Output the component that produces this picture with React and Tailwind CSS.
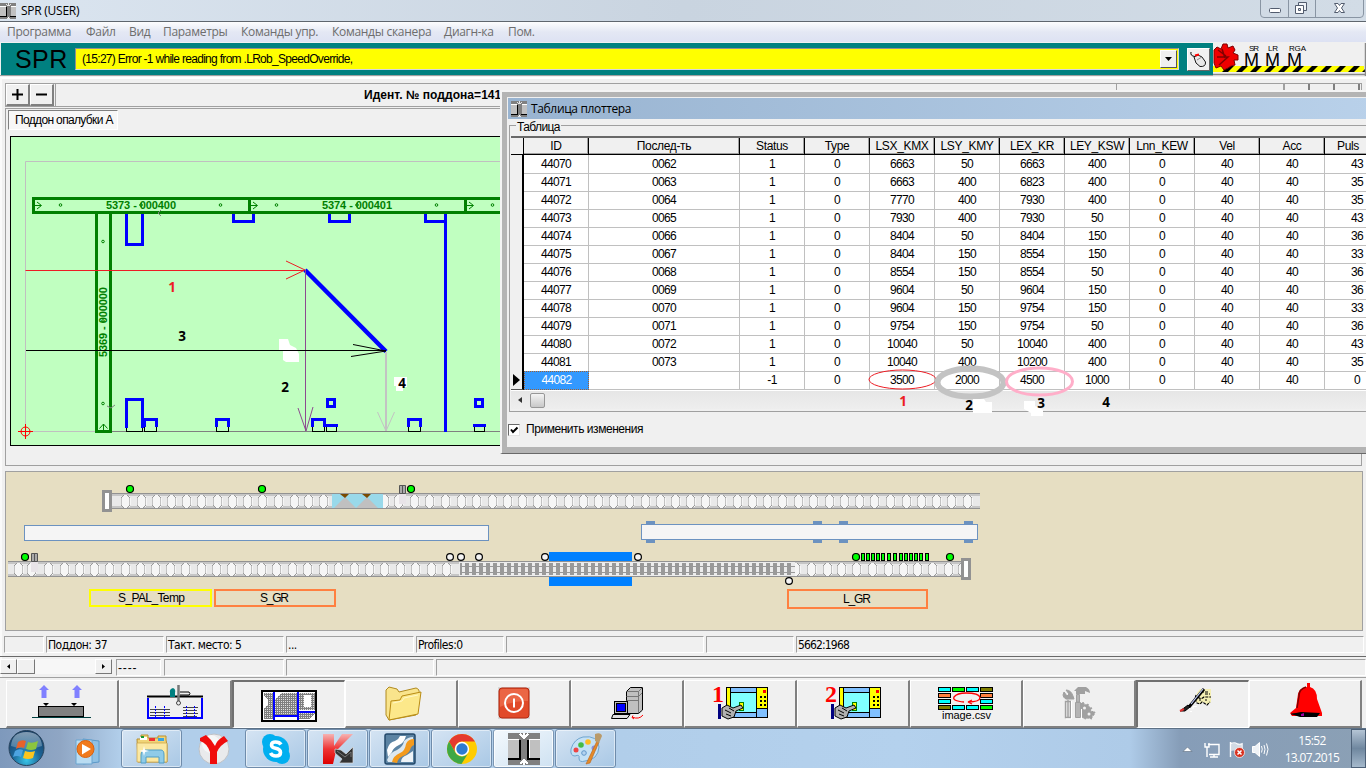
import React from "react";

const SANS = "font-['Liberation_Sans',sans-serif]";
const UI = "font-['Open_Sans','Noto_Sans',sans-serif]";

function PressIcon({ className }) {
  return (
    <svg className={className} viewBox="0 0 32 32" shapeRendering="crispEdges">
      <rect width="32" height="32" fill="#808080" />
      <path d="M0 7H11V26H0Z" fill="#c0c0c0" />
      <path d="M0 6H11V7H0ZM21 6H32V7H21Z" fill="#fff" />
      <path d="M11 7H13V27H0V25H11Z" fill="#000" />
      <path d="M21 7H32V25H21Z" fill="#c0c0c0" />
      <path d="M19 7H21V25H32V27H19Z" fill="#000" />
      <path d="M21 7V25" stroke="#fff" />
      <path d="M16 0V5M12 1L16 5L20 1M16 32V27M12 31L16 27L20 31" stroke="#fff" strokeWidth="1.6" fill="none" />
    </svg>
  );
}

function TitleBar() {
  return (
    <div className="relative flex h-[22px] shrink-0 items-start border-b border-[#5f666e] bg-linear-to-r from-[#dbe5f0] via-[#c9d4e0] to-[#d2dce6]">
      <PressIcon className="mt-[3px] h-4 w-4" />
      <span className={`ml-[5px] mt-[2px] text-[12px] leading-[17px] tracking-[-0.25px] text-black ${UI}`}>SPR (USER)</span>
      <svg className="ml-auto mr-[2px] h-[18px] w-[104px]" viewBox="1260 0 104 18">
        <path d="M1260.5 0V14Q1260.5 17.5 1264 17.5H1360Q1363.5 17.5 1363.5 14V0M1288.5 0V17M1315.5 0V17" fill="none" stroke="#8995a3" />
        <rect x="1269.5" y="8.5" width="11" height="4" rx="1" fill="#fff" stroke="#525c6e" />
        <path d="M1298.5 2.5H1306.5V10.5H1298.5Z" fill="#eef2f7" stroke="#525c6e" />
        <path d="M1295.5 5.5H1303.5V13.500H1295.500Z" fill="#fff" stroke="#525c6e" />
        <path d="M1298.500 8.500H1300.500V10.500H1298.500Z" fill="#dce4ed" stroke="#525c6e" />
        <path d="M1334.500 3.500H1338L1339.500 5.500L1341 3.500H1344.500L1341.500 8L1344.500 12.500H1341L1339.500 10.500L1338 12.500H1334.500L1337.500 8Z" fill="#fff" stroke="#525c6e" />
      </svg>
    </div>
  );
}

const MENU = [
  ["Программа", "w-[65px]"],
  ["Файл", "w-[29px]"],
  ["Вид", "w-[20px]"],
  ["Параметры", "w-[64px]"],
  ["Команды упр.", "w-[77px]"],
  ["Команды сканера", "w-[98px]"],
  ["Диагн-ка", "w-[50px]"],
  ["Пом.", "w-[28px]"],
];

function MenuBar() {
  return (
    <div className={`flex h-[20px] shrink-0 items-center gap-[14px] bg-linear-to-b from-[#fdfdfe] via-[#e4e8f4] to-[#dde2f3] pl-[7px] text-[12px] leading-[18px] tracking-[-0.3px] text-[#6d6d6d] ${UI}`}>
      {MENU.map(([t, w]) => (
        <span key={t} className={`${w} whitespace-nowrap`}>{t}</span>
      ))}
    </div>
  );
}

function RobotStatus() {
  const stripes = Array.from({ length: 11 }, (_, i) => 1222 + i * 14);
  return (
    <svg className="h-[33px] w-[153px] bg-[#f0f0f0]" viewBox="1213 43 153 33">
      <rect x="1213" y="66" width="151" height="6" fill="#ff0" />
      {stripes.map((x) => (
        <path key={x} d={`M${x} 72L${x + 6} 66H${x + 12}L${x + 6} 72Z`} fill="#000" />
      ))}
      <path d="M1223 44L1227 44L1228 48L1233 46L1235 50L1233 53L1238 55V60L1234 60L1235 65L1231 66L1228 68L1224 70L1221 66L1216 68L1214 63V50L1217 47L1221 49Z" fill="#f00000" stroke="#800000" />
      <path d="M1218 50L1226 56M1217 57H1228L1219 65M1222 49L1225 58" stroke="#800000" strokeWidth="1.500" fill="none" />
      <g fontFamily="Liberation Sans, sans-serif" fontSize="8" fill="#000">
        <text x="1249" y="51" textLength="10">SR</text>
        <text x="1268" y="51" textLength="10">LR</text>
        <text x="1289" y="51" textLength="17">RGA</text>
        <g fontSize="18">
          <text x="1244" y="66">M</text>
          <text x="1265" y="66">M</text>
          <text x="1287" y="66">M</text>
        </g>
      </g>
      <path d="M1213 74.500H1365M1365.500 43V76" stroke="#8a8a8a" strokeWidth="1.500" />
    </svg>
  );
}

function Header() {
  return (
    <div className="mt-px flex h-[33px] shrink-0 border-b border-[#a0a0a0] pl-px">
      <div className="flex h-[32px] w-[1212px] items-start bg-[#008080]">
        <span className={`ml-[14px] mt-[4px] w-[60px] text-[25px] leading-[25px] tracking-[0.4px] text-black ${SANS}`}>SPR</span>
        <div className="mt-[5px] flex h-[22px] w-[1104px] border border-[#d8d8d8] border-t-[#909090] border-l-[#909090] bg-[#ff0] p-px">
          <span className={`grow pl-[5px] pt-px text-[12px] leading-[17px] tracking-[-0.7px] whitespace-nowrap text-black ${SANS}`}>
            (15:27) Error -1 while reading from .LRob_SpeedOverride,
          </span>
          <div className="flex h-[18px] w-[17px] items-center justify-center border border-white border-r-[#555] border-b-[#555] bg-[#f0f0f0]">
            <svg className="h-1 w-[7px]" viewBox="0 0 7 4"><path d="M0 0H7L3.500 4Z" /></svg>
          </div>
        </div>
        <div className="mt-[5px] ml-[8px] flex h-[23px] w-[23px] items-center justify-center border border-white border-r-[#666] border-b-[#666] bg-[#f0f0f0]">
          <svg className="h-[17px] w-[17px]" viewBox="0 0 17 17">
            <path d="M1 1Q0 5 5 5.500" fill="none" stroke="#000" />
            <path d="M4 6L8 4L12 6L15.500 11Q16 16 10 15.500L6 12Z" fill="#e8e8e8" stroke="#000" strokeWidth=".9" />
            <path d="M5 4.500L9 3.500" stroke="#f00" strokeWidth="2" fill="none" />
            <path d="M7 9L11 6.500" stroke="#777" strokeWidth=".8" fill="none" />
          </svg>
        </div>
      </div>
      <RobotStatus />
    </div>
  );
}

function PlanText({ x, y, w, children, ...rest }) {
  return (
    <text x={x} y={y} textLength={w} fontFamily="Liberation Sans, sans-serif" fontSize="11" fontWeight="bold" fill="#008000" {...rest}>
      {children}
    </text>
  );
}

function PalletDrawing() {
  return (
    <svg className="h-[310px] w-[1345px]" viewBox="10 136 1345 310">
      <rect x="10.500" y="136.500" width="1344" height="309" fill="#c0ffc0" stroke="#000" />
      <path d="M1300 161.500H25.500V431.500H100" fill="none" stroke="#c0c0c0" />
      <path d="M100 431.500H1300" stroke="#808080" />
      <g fill="none" stroke="#008000" strokeWidth="3" shapeRendering="crispEdges">
        <path d="M600 198.500H33.500V212.500H600M249.500 199V212M465.500 199V212M96.500 213V431.500H110.500V213" />
      </g>
      <g fill="none" stroke="#008000" strokeWidth="1">
        <path d="M35 205.500H41M37 202L41.500 205.500L37 209M251 205.500H257M253 202L257.500 205.500L253 209M467 205.500H473M469 202L473.500 205.500L469 209M103.500 430V424M99.500 428.500L103.500 424L107.500 428.500" />
        {[60.500, 141, 220.500, 276.500, 357, 436.500, 492.500].map((x) => <circle key={x} cx={x} cy="205" r="1.300" />)}
        {[241.500, 321, 403.500].map((y) => <circle key={y} cx="103" cy={y} r="1.300" />)}
      </g>
      <PlanText x="106" y="209" w="70">5373 - 000400</PlanText>
      <PlanText x="322" y="209" w="70">5374 - 000401</PlanText>
      <PlanText x="0" y="0" w="70" transform="translate(107 357) rotate(-90)">5369 - 000000</PlanText>
      <path d="M161 210L158 213L161 216M107 406L111 408L115 405" fill="none" stroke="#808080" />
      <g fill="none" stroke="#000" shapeRendering="crispEdges">
        <path d="M126.500 426V431.500H142.500V426M144.500 426V431.500H156.500V426M216.500 426V431.500H228.500V426M312.500 426V431.500H324.500V426M326.500 426V431.500H336.500V426M408.500 426V431.500H420.500V426M474.500 426V431.500H484.500V426" />
      </g>
      <g fill="none" stroke="#00f" strokeWidth="3" shapeRendering="crispEdges">
        <path d="M126.500 214V244.500H142.500V214M233.500 214V221.500H253.500V214M329.500 214V221.500H349.500V214M425.500 214V221.500H445.500M445.500 214V432" />
        <path d="M126.500 428V399.500H142.500V428M144.500 427V419.500H156.500V427M216.500 427V419.500H228.500V427M312.500 427V419.500H324.500V427M326.500 427V425.500H336.500V427M408.500 427V419.500H420.500V427M474.500 427V425.500H484.500V427" />
        <path d="M327.500 399.500H334.500V406.500H327.500ZM475.500 399.500H482.500V406.500H475.500Z" />
      </g>
      <path d="M25.500 270.500H305M286 261L305 270L286 279" fill="none" stroke="#ed1c24" />
      <path d="M279 339H288L290 345L296 348L299 354V362H286L283 360V351L279 350Z" fill="#fff" />
      <path d="M305 270L386 351.500" stroke="#00f" strokeWidth="4.500" />
      <path d="M305.500 270V431M298 408L306 431L313 407" fill="none" stroke="#8d4a90" />
      <path d="M26 350.500H386M353 344.500L386 351L351 356.500" fill="none" stroke="#000" />
      <path d="M386 352V431" stroke="#c3c3c3" strokeWidth="2" />
      <path d="M377.500 412L386 431L394.500 412" fill="none" stroke="#c3c3c3" />
      <path d="M394 377H407V387H403V391H396V386H394Z" fill="#fff" />
      <g stroke="#f00" fill="none">
        <circle cx="25.500" cy="431.500" r="4.500" />
        <path d="M18 431.500H33M25.500 424V439" />
      </g>
      <g fontFamily="Open Sans, sans-serif" fontWeight="bold" fontSize="13.500" textAnchor="middle">
        <text x="172" y="292" fill="#ed1c24">1</text>
        <text x="182" y="341">3</text>
        <text x="285" y="392">2</text>
        <text x="402" y="388">4</text>
      </g>
    </svg>
  );
}

function ZoomButton({ children }) {
  return (
    <div className="flex h-[22px] w-[24px] items-center justify-center border border-white border-r-2 border-b-2 border-r-[#808080] border-b-[#808080] bg-[#f0f0f0]">
      {children}
    </div>
  );
}

function Workspace() {
  return (
    <div className="mt-[4px] flex h-[383px] shrink-0 flex-col gap-px pl-[5px] pr-[4px]">
      <div className="flex h-[24px] border border-[#a0a0a0] border-b-[#a0a0a0]">
        <ZoomButton><svg className="h-[11px] w-[11px]" viewBox="0 0 11 11"><path d="M5.500 0V11M0 5.500H11" stroke="#000" strokeWidth="2" /></svg></ZoomButton>
        <ZoomButton><svg className="h-[11px] w-[11px]" viewBox="0 0 11 11"><path d="M0 5.500H11" stroke="#000" strokeWidth="2" /></svg></ZoomButton>
        <div className="ml-px flex grow border-l border-[#a0a0a0]">
          <div className={`w-[1060px] pl-[308px] text-[12px] leading-[22px] font-bold tracking-[0.05px] whitespace-nowrap ${SANS}`}>Идент. № поддона=141</div>
          <div className="w-[169px] border-l border-r-2 border-[#a0a0a0]" />
          <div className="w-[25px] border-r-2 border-[#808080]" />
          <div className="w-[25px] border-r-2 border-[#808080]" />
          <div className="w-[25px] border-r-2 border-[#808080]" />
        </div>
      </div>
      <div className="h-[358px] border border-[#a0a0a0] pl-[2px] pt-px">
        <div className={`h-[20px] w-[110px] border border-[#808080] border-r-white border-b-white bg-[#f7f7f7] pl-[6px] text-[12px] leading-[18px] tracking-[-0.65px] whitespace-nowrap ${SANS}`}>Поддон опалубки A</div>
        <div className="mt-[6px] ml-[2px]"><PalletDrawing /></div>
      </div>
    </div>
  );
}

function Roller({ x, y }) {
  const l = Math.round(x) - 4;
  return (
    <g shapeRendering="crispEdges">
      <path d={`M${l} ${y + 3}h1v-2h2v-1h4v1h2v2h1v7h-1v2h-2v1h-4v-1h-2v-2h-1z`} fill="#f6f6f6" />
      <path d={`M${l} ${y + 3}h1v7h-1zM${l + 8} ${y + 3}h1v7h-1z`} fill="#c2c2c2" />
      <path d={`M${l} ${y + 2}h1v1h-1zM${l + 1} ${y + 1}h1v1h-1zM${l + 8} ${y + 2}h1v1h-1zM${l + 7} ${y + 1}h1v1h-1zM${l} ${y + 10}h1v1h-1zM${l + 1} ${y + 11}h1v1h-1zM${l + 8} ${y + 10}h1v1h-1zM${l + 7} ${y + 11}h1v1h-1zM${l + 2} ${y}h1v1h-1zM${l + 6} ${y}h1v1h-1zM${l + 2} ${y + 12}h1v1h-1zM${l + 6} ${y + 12}h1v1h-1z`} fill="#999" />
    </g>
  );
}

function Track({ x, y, w }) {
  return (
    <g shapeRendering="crispEdges">
      <rect x={x} y={y} width={w} height="16" fill="#c6c6c6" />
      <rect x={x} y={y + 3} width={w} height="10" fill="#e9e9e9" />
      <rect x={x} y={y} width={w} height="1" fill="#929292" />
      <rect x={x} y={y + 15} width={w} height="1" fill="#929292" />
    </g>
  );
}

function Buffer({ x, y }) {
  return (
    <g shapeRendering="crispEdges">
      <rect x={x} y={y} width="10" height="22" fill="#929292" />
      <rect x={x + 3} y={y + 3} width="4" height="16" fill="#fff" />
    </g>
  );
}

const UPPER = [125, 141, 156, 171, 185.500, 201, 217, 232, 246.500, 262, 278, 293.500, 308, 322.500, 384, 398, 414, 429, 445, 460.500, 476, 492, 507, 522, 537, 552, 568, 583, 598, 613, 629, 645, 660, 675, 690, 705, 721, 737, 752, 767, 782, 798, 813, 829, 844, 859, 874, 890, 906, 921, 936, 951, 967];
const LOWER = [18, 31, 48, 64, 79, 94, 109, 125, 140, 154.500, 169.500, 185, 200.500, 215.500, 231, 246.500, 261, 276, 292, 307, 322.500, 338, 353.500, 368.500, 384, 400, 415, 430.500, 446];
const LOWER_RIGHT = [795, 811, 826.500, 841, 856, 872, 887.500, 902.500, 917, 932, 948, 962];
const RACK = Array.from({ length: 47 }, (_, i) => 465 + i * 7);
const GREEN = [[130, 489], [262, 489], [411, 489], [25, 557], [856, 557], [950, 557]];
const WHITE = [[450, 557], [461, 557], [479, 557], [545, 557], [638, 557], [789, 581]];
const LEDS = [861, 866, 871, 876, 881, 887, 893, 899, 904, 909, 914, 919, 925];

function LineDiagram() {
  return (
    <div className="mt-[5px] ml-[5px] h-[160px] w-[1358px] shrink-0 border border-[#a0a0a0] bg-[#e6dec2]">
      <svg className="h-[158px] w-[1356px]" viewBox="6 472 1356 158">
        <Track x={110} y={493} w={870} />
        {UPPER.map((x) => <Roller key={x} x={x} y={495} />)}
        <Buffer x={102} y={490} />
        <rect x="332" y="494" width="51" height="14" fill="#99d9ea" />
        <path d="M334 508L345 497L356 508ZM356 508L367 497L378 508Z" fill="#c0c0c0" />
        <path d="M340 494H349L345 498ZM362 494H371L367 498Z" fill="#7a4a00" />
        <rect x="399" y="494" width="7" height="10" fill="#e8e4e8" />
        <path d="M399.500 485.500H405.500V493.500H399.500ZM402.500 486V493" fill="#aaa" stroke="#555" />

        <g shapeRendering="crispEdges">
          <path d="M24.500 525.500H488.500V540.500H24.500ZM641.500 524.500H977.500V539.500H641.500Z" fill="#f5f5f5" stroke="#6c92c0" />
          {[646, 813, 839, 964].map((x) => (
            <path key={x} d={`M${x} 521h9v3h-9zM${x} 540h9v3h-9z`} fill="#6c92c0" />
          ))}
          <path d="M549 552H632V561H549ZM549 577H632V586H549Z" fill="#0080ff" />
        </g>

        <Track x={8} y={561} w={955} />
        {LOWER.map((x) => <Roller key={x} x={x} y={563} />)}
        {LOWER_RIGHT.map((x) => <Roller key={x} x={x} y={563} />)}
        <g shapeRendering="crispEdges">
          <rect x="459" y="562" width="336" height="14" fill="#ececec" />
          <path d="M460 566.500H795M460 572.500H795" stroke="#999" />
          <rect x="460" y="563" width="2" height="12" fill="#999" />
          {RACK.map((x) => <rect key={x} x={x} y="563" width="4" height="12" fill="#999" />)}
        </g>
        <Buffer x={961} y={558} />
        <rect x="31" y="562" width="7" height="10" fill="#e8e4e8" />
        <path d="M31.500 553.500H37.500V561.500H31.500ZM34.500 554V561" fill="#aaa" stroke="#555" />

        {GREEN.map(([x, y]) => <circle key={x} cx={x} cy={y} r="3.500" fill="#0f0" stroke="#000" strokeWidth="1.200" />)}
        {WHITE.map(([x, y]) => <circle key={x} cx={x} cy={y} r="3.400" fill="#f5f5f5" stroke="#000" strokeWidth="1.200" />)}
        {LEDS.map((x) => <rect key={x} x={x + 0.500} y="553.500" width="3" height="7" fill="#0f0" stroke="#000" shapeRendering="crispEdges" />)}

        <g fill="none" strokeWidth="2" shapeRendering="crispEdges">
          <rect x="90" y="590" width="121" height="16" stroke="#ff0" />
          <rect x="215" y="590" width="120" height="16" stroke="#ff8040" />
          <rect x="788" y="590" width="139" height="18" stroke="#ff8040" />
        </g>
        <g fontFamily="Liberation Sans, sans-serif" fontSize="12" fill="#000">
          <text x="118" y="602" textLength="67">S_PAL_Temp</text>
          <text x="260" y="602" textLength="29">S_GR</text>
          <text x="843" y="603" textLength="28">L_GR</text>
        </g>
      </svg>
    </div>
  );
}

const CELL = "h-[17px] border border-[#a0a0a0] border-r-white border-b-white pl-px text-[12px] leading-[16px] whitespace-nowrap";

function StatusBars() {
  return (
    <>
      <div className="flex h-[26px] shrink-0 items-start gap-[2px] border-b border-[#696969] pt-[5px] pl-[4px] font-['DejaVu_Sans_Condensed','DejaVu_Sans',sans-serif] text-black tracking-[-0.5px]">
        <div className={`${CELL} w-[40px]`} />
        <div className={`${CELL} w-[118px]`}>Поддон: 37</div>
        <div className={`${CELL} w-[118px]`}>Такт. место: 5</div>
        <div className={`${CELL} w-[128px]`}>...</div>
        <div className={`${CELL} w-[88px]`}>Profiles:0</div>
        <div className={`${CELL} w-[198px]`} />
        <div className={`${CELL} w-[88px]`} />
        <div className={`${CELL} w-[568px] tracking-[-0.85px]`}>5662:1968</div>
      </div>
      <div className="flex h-[21px] shrink-0 items-start border-b border-[#a0a0a0] pt-[2px]">
        <div className="flex h-[15px] w-[112px] bg-[#f7f7f7]">
          <div className="flex w-[17px] items-center justify-center border border-white border-r-[#777] border-b-[#777] bg-[#f0f0f0]"><svg className="h-[5px] w-[3px]" viewBox="0 0 3 5"><path d="M3 0V5L0 2.500Z" /></svg></div>
          <div className="w-[18px] border border-white border-r-[#777] border-b-[#777] bg-[#f0f0f0]" />
          <div className="ml-auto flex w-[17px] items-center justify-center border border-white border-r-[#777] border-b-[#777] bg-[#f0f0f0]"><svg className="h-[5px] w-[3px]" viewBox="0 0 3 5"><path d="M0 0V5L3 2.500Z" /></svg></div>
        </div>
        <div className={`${CELL} ml-[4px] w-[45px] tracking-[0.900px] ${SANS}`}>----</div>
        <div className={`${CELL} ml-[3px] w-[120px]`} />
        <div className={`${CELL} ml-[2px] w-[148px]`} />
        <div className={`${CELL} ml-[2px] w-[931px]`} />
      </div>
    </>
  );
}

function PanelIcon({ n }) {
  return (
    <svg className="h-[46px] w-[110px]" viewBox="0 0 110 46">
      <text x="27" y="21" fontFamily="Liberation Serif, serif" fontWeight="bold" fontSize="24" fill="#f00">{n}</text>
      <g shapeRendering="crispEdges" stroke="#000">
        <path d="M41.500 6.500H71.500V36.500H41.500Z" fill="#80c0ff" />
        <path d="M41.500 6.500H45.500V30H41.500Z" fill="#ff0" />
        <path d="M45.500 11.500H71.500V31.500H45.500Z" fill="#80ffff" />
        <path d="M71.500 6.500H82.500V27.500H71.500Z" fill="#ff0" />
        <path d="M71.500 27.500H82.500V36.500H71.500Z" fill="#80c0ff" />
        <rect x="54.500" y="21.500" width="4" height="8" fill="#ff0" stroke="#008000" />
      </g>
      <path d="M75 15h2v2h-2zM79 15h2v2h-2zM75 19h2v2h-2zM79 19h2v2h-2zM75 23h2v2h-2zM79 23h2v2h-2z" />
      <rect x="78" y="9" width="3" height="3" fill="#f00" />
      <rect x="33" y="23" width="3" height="15" fill="#000080" />
      <path d="M37 27L42 24L48 27L56 24L58 27L51 30L49 36L43 38L37 35Z" fill="#b0b0b0" stroke="#000" />
      <path d="M40 29L46 32M41 33L46 35M44 27L49 30" stroke="#000" />
    </svg>
  );
}

function ToolIcon({ kind }) {
  if (kind === "press1") return <PanelIcon n="1" />;
  if (kind === "press2") return <PanelIcon n="2" />;
  return (
    <svg className="h-[46px] w-[110px]" viewBox="0 0 110 46">
      {kind === "lift" && (
        <g>
          <path d="M37 4L42 9H39.500V17H34.500V9H32ZM70 4L75 9H72.500V17H67.500V9H65Z" fill="#8080ff" />
          <path d="M36 22H42L39 25ZM64 22H70L67 25Z" />
          <rect x="31.500" y="25.500" width="45" height="10" fill="#808080" stroke="#000" />
          <path d="M25 36.500H84" stroke="#004040" />
        </g>
      )}
      {kind === "robot" && (
        <g fill="none">
          <path d="M28 17V37H82V17" stroke="#00f" strokeWidth="2" />
          <path d="M27 15.500H83" stroke="#000" strokeWidth="2" />
          <path d="M50 16V12Q49 8 53 7Q56 8 55 12V16Z" fill="#008080" />
          <path d="M58.500 4V20" stroke="#777" strokeWidth="2.500" />
          <circle cx="58.500" cy="22" r="2" stroke="#444" />
          <path d="M60 11H69Q71 13 69 14H60" stroke="#000" />
          <path d="M30 28.500H50M30 31.500H50M30 34.500H50M63 26.500H78M63 29.500H77M63 32.500H78M63 35.500H77" stroke="#444" />
          <path d="M35.500 25V37M44.500 25V37M66.500 25V37M74.500 25V37" stroke="#00f" strokeDasharray="2 1" />
        </g>
      )}
      {kind === "layout" && (
        <g shapeRendering="crispEdges">
          <defs>
            <pattern id="mesh" width="2" height="2" patternUnits="userSpaceOnUse"><rect width="2" height="2" fill="#e0e0e0" /><rect width="1" height="2" fill="#808080" /><rect width="2" height="1" fill="#808080" /></pattern>
          </defs>
          <rect x="28" y="9" width="54" height="30" fill="#fff" stroke="#000" strokeWidth="2" />
          <path d="M30 11H39V37H30V26L34 22V18L30 14ZM41 17L47 11H63V33H41ZM65 11H81V28H65ZM65 31H81L76 37H65Z" fill="url(#mesh)" />
          <rect x="70" y="13" width="7" height="12" fill="#fff" />
          <path d="M40 10V38M64 10V38M40 34H64M64 30H81" stroke="#00f" strokeWidth="2" />
        </g>
      )}
      {kind === "folder" && (
        <g transform="translate(39 5)">
          <path d="M1 4L4 1L12 3L14 6L31 2Q35 3 34 8L31 29L4 34L1 29Z" fill="#f9e48c" stroke="#b08a20" />
          <path d="M4 34L6 15L15 14L17 10L36 6L33 28Z" fill="#fce88a" stroke="#b98c14" />
          <path d="M8 17L17 15L19 12L33 9" stroke="#fff8c8" fill="none" />
        </g>
      )}
      {kind === "power" && (
        <g>
          <rect x="39" y="6" width="32" height="32" fill="#d8d8d8" />
          <rect x="40" y="7" width="30" height="30" rx="3" fill="#e14a29" stroke="#b32a12" />
          <path d="M41 10Q41 8 44 8H67Q69 8 69 10V20Q55 19 41 26Z" fill="#f07454" opacity=".65" />
          <circle cx="55" cy="22" r="9" fill="none" stroke="#fff" strokeWidth="2" />
          <path d="M55 17.500V26.500" stroke="#fff" strokeWidth="2" />
        </g>
      )}
      {kind === "server" && (
        <g stroke="#000">
          <path d="M54.500 10.500L58.500 6.500H70.500V29L66.500 32.500H54.500Z" fill="#c0c0c0" />
          <path d="M54.500 10.500H66.500L70.500 6.500M66.500 10.500V32M54.500 15.500H66.500L70 12M54.500 19.500H66.500" fill="none" stroke="#777" />
          <rect x="42.500" y="20.500" width="13" height="12" fill="#c0c0c0" />
          <rect x="44.500" y="22.500" width="9" height="8" fill="#00f" />
          <path d="M41 33.500H58L55 37.500H39.500Z" fill="#e0e0e0" />
          <path d="M60 36Q67 39 71 34M61 34.500L60 36.500L62 38" fill="none" stroke="#f00" />
        </g>
      )}
      {kind === "csv" && (
        <g>
          {[["#0ff", 28, 6], ["#0f0", 42, 6], ["#0ff", 56, 6], ["#808000", 70, 6], ["#ff8040", 28, 12], ["#ff8040", 70, 12], ["#0ff", 28, 18], ["#0ff", 70, 18], ["#808000", 28, 24], ["#0ff", 42, 24], ["#0ff", 56, 24], ["#0f0", 70, 24]].map(([c, x, y]) => (
            <rect key={`${x}-${y}`} x={x - 0.500} y={y + 0.500} width="12" height="4" fill={c} stroke="#000" shapeRendering="crispEdges" />
          ))}
          <path d="M53 21Q41 20 43 16Q46 12 55 12Q68 12 69 16.500Q69 21 57 21L61 19M57 21L61 23" fill="none" stroke="#f00" strokeWidth="1.300" />
          <text x="31" y="38" fontFamily="Liberation Sans, sans-serif" fontSize="11" textLength="49">image.csv</text>
        </g>
      )}
      {kind === "tools" && (
        <g fill="#a0a0a0">
          <path d="M42 9Q47 9 49 15L50 18H45Q40 19 39 14L40 11L43 15L45 13Z" stroke="#a0a0a0" />
          <path d="M41.500 20.500H46.500V36.500H41.500ZM44 19V36" fill="#e8e8e8" stroke="#a0a0a0" strokeWidth="1.400" />
          <path d="M50 10L54 6H62Q66 8 66 12L61 10V13H52V10Z" />
          <path d="M52.500 13.500H55.500V21H52.500ZM51.500 21.500H56.500V36.500H51.500Z" fill="#b4b4b4" stroke="#a0a0a0" />
          <path d="M57 23L59 21L61 24L64 23L65 26L68 27L66 30L71 31L70 34L68 35V38L64 37L61 38L58 36L57 31Z" strokeDasharray="2 1" stroke="#a0a0a0" />
          <circle cx="60.500" cy="27" r="1.500" fill="#f0f0f0" /><circle cx="65" cy="33" r="1.500" fill="#f0f0f0" />
          <path d="M47.500 20V38M57.500 28V38M42 38H47" stroke="#fff" fill="none" />
        </g>
      )}
      {kind === "paint" && (
        <g>
          <path d="M59 11L62 7H73V20L71 22L68 22L66 20L62 22L58 20L57 16Z" fill="#f4efb4" />
          <path d="M58 13L57 17L59 21L62 22L64 20L66 21L69 23L72 20M60 15Q63 18 66 15H73M63 10H70M67 12H72M61 18H63M67 18H69" stroke="#000" fill="none" strokeWidth="1.100" strokeDasharray="3 1" />
          <path d="M66 7L51 25" stroke="#000" strokeWidth="3" />
          <path d="M65 7L53 22" stroke="#c8d4ff" strokeWidth="1.200" />
          <path d="M42 29L50 23L52 25L47 29Z" stroke="#000" fill="#222" />
          <path d="M42 29L46 27" stroke="#d33" strokeWidth="2" />
          <path d="M52 29.500H54M55 27V24.500H59" stroke="#fff" fill="none" />
        </g>
      )}
      {kind === "bell" && (
        <g>
          <path d="M57 2H60V6Q67 8 67 18L72 32V35H42L40 32L46 27L48 13Q49 7 57 6Z" fill="#f00" />
          <path d="M56 6Q49 8 49 15L47 27M41 33H47" fill="none" stroke="#800000" strokeWidth="1.500" />
          <path d="M41 33L51 31L70 32L67 36H50Z" fill="#000" />
          <path d="M51 33L54 32V35H51Z" fill="#a000a0" />
        </g>
      )}
    </svg>
  );
}

const TOOLS = ["lift", "robot", "layout", "folder", "power", "server", "press1", "press2", "csv", "tools", "paint", "bell"];

function ToolBar() {
  return (
    <div className="flex h-[50px] shrink-0 pt-[2px] pl-[6px]">
      {TOOLS.map((k) => {
        const down = k === "layout" || k === "paint";
        return (
          <div
            key={k}
            className={
              down
                ? "h-[48px] w-[113px] border border-t-2 border-l-2 border-[#707070] border-r-white border-b-white bg-[#f0f0f0]"
                : "h-[48px] w-[113px] border border-r-2 border-b-2 border-white border-r-[#808080] border-b-[#808080]"
            }
          >
            <ToolIcon kind={k} />
          </div>
        );
      })}
    </div>
  );
}

function TaskIcon({ kind }) {
  if (kind === "spr") return <PressIcon className="h-8 w-8" />;
  return (
    <svg className="h-8 w-8" viewBox="0 0 32 32">
      {kind === "explorer" && (
        <g>
          <path d="M1 6H5V2H12V5H22V3H30V7L31 12V29H2Z" fill="#f0d477" stroke="#b99132" />
          <path d="M4 4H11V7H4Z" fill="#fff" /><path d="M5 3H8V5H5Z" fill="#1c9b30" /><path d="M13 5H19V8H13Z" fill="#e33" /><path d="M22 5H28V8H22Z" fill="#3ba4e0" />
          <path d="M1 10H31V29H1Z" fill="#fbe8a2" stroke="#c9a048" strokeWidth=".7" />
          <path d="M5 30V22Q5 17 10 17H25Q28 17 28 22V30H23V24H10V30Z" fill="#8fcbe8" stroke="#4f9dc6" />
          <path d="M8 13L9 17L13 18L9 19L8 23L7 19L3 18L7 17Z" fill="#fff" />
        </g>
      )}
      {kind === "yandex" && (
        <g>
          <circle cx="16" cy="16" r="15" fill="#e9eaec" stroke="#bfc2c6" />
          <circle cx="13" cy="11" r="9" fill="#fff" opacity=".6" />
          <path d="M2 5L8 2Q14 7 17 13Q19 7 26 3L30 8Q22 12 19 19V31H12V19Q9 10 2 8Z" fill="#f00c0c" />
        </g>
      )}
      {kind === "skype" && (
        <g>
          <circle cx="10" cy="9" r="8" fill="#00aff0" /><circle cx="22" cy="23" r="8" fill="#00aff0" /><circle cx="16" cy="16" r="13" fill="#00aff0" />
          <path d="M21 11.500Q19.500 9 15.500 9Q11.500 9 11.500 12Q11.500 14.500 15.500 15.300Q20.500 16.300 20.500 19.500Q20.500 23 16 23Q12 23 10.500 20" stroke="#fff" strokeWidth="3.600" fill="none" />
        </g>
      )}
      {kind === "kaspersky" && (
        <g>
          <defs><linearGradient id="kr" x1="0" y1="0" x2="0" y2="1"><stop offset="0" stopColor="#f6b3b3" /><stop offset=".5" stopColor="#e33" /><stop offset="1" stopColor="#d00" /></linearGradient></defs>
          <path d="M1 1H12V13L20 1H31L14 18L11 31H1Z" fill="url(#kr)" />
          <path d="M13 16L19 17L24 21L31 14V30H17L20 26L13 20Z" fill="#333" stroke="#ddd" strokeWidth=".7" />
          <path d="M15 18L23 24L29 19V24" fill="none" stroke="#777" />
        </g>
      )}
      {kind === "foxit" && (
        <g>
          <rect x="1" y="1" width="30" height="30" rx="2" fill="#5b83a3" stroke="#24496b" strokeWidth="1.500" />
          <path d="M3 17Q5 9 11 8Q15 6 16 3H22Q20 10 15 12Q9 15 8 19L4 24Z" fill="#fff" />
          <path d="M3 27Q6 19 13 17Q19 14 20 8Q24 4 29 4V9Q25 10 24 14Q23 20 16 22Q10 24 9 29H4Z" fill="#dce8f1" />
          <path d="M8 29Q9 23 16 20Q21 18 22 11Q24 6 30 6V12Q27 13 26 17Q24 21 19 23Q14 25 13 30Z" fill="#f39a1c" />
          <path d="M17 29Q17 24 23 22L29 18V29Z" fill="#eef3f7" />
        </g>
      )}
      {kind === "chrome" && (
        <g>
          <circle cx="16" cy="16" r="15" fill="#fc0" />
          <path d="M3 8.500A15 15 0 0 1 29 8.500H16A7.500 7.500 0 0 0 9.500 19.500Z" fill="#e53a2e" />
          <path d="M3 8.500A15 15 0 0 0 15.500 31L22.500 19.700A7.500 7.500 0 0 1 9.500 19.700Z" fill="#3fa845" />
          <circle cx="16" cy="16" r="7.200" fill="#fff" />
          <circle cx="16" cy="16" r="5.700" fill="#2d7bd1" />
        </g>
      )}
      {kind === "paint" && (
        <g>
          <path d="M13 4Q28 2 29 14Q28 27 15 28Q9 30 9 25Q10 21 5 23Q0 23 1 16Q4 6 13 4Z" fill="#c4e1f5" stroke="#6fa5cf" />
          <circle cx="14" cy="20" r="2.300" fill="#b4d4ef" stroke="#6298cb" />
          <circle cx="6" cy="17" r="2.500" fill="#e44" /><circle cx="11" cy="12" r="2.800" fill="#4b4" /><circle cx="18" cy="9" r="2.800" fill="#fb2" /><circle cx="24" cy="15" r="2.500" fill="#8a8fd8" />
          <path d="M27 8L29 9L20 30L16 31Z" fill="#e48a29" stroke="#b9631a" strokeWidth=".6" />
          <path d="M25 1Q31 -1 32 3L29 10L25 8Z" fill="#b99a6a" />
        </g>
      )}
    </svg>
  );
}

const TASKS = ["explorer", "yandex", "skype", "kaspersky", "foxit", "chrome", "spr", "paint"];

function TaskBar() {
  return (
    <div className="flex h-[40px] shrink-0 items-start border-t border-[#5d7186] bg-[linear-gradient(90deg,#7e99bc_0px,#8fa6c4_60px,#b1ceea_120px,#b1ceea_620px,#b4d1ed_900px,#aecbe8_1130px,#869db8_1180px,#8ba0b5_1366px)]">
      <svg className="h-[39px] w-[121px]" viewBox="0 729 121 39">
        <defs>
          <radialGradient id="orb" cx=".5" cy=".85" r=".8"><stop offset="0" stopColor="#38c5e8" /><stop offset=".5" stopColor="#1c6597" /><stop offset="1" stopColor="#173f66" /></radialGradient>
          <linearGradient id="gloss" x1="0" y1="0" x2="0" y2="1"><stop offset="0" stopColor="#d9e6f0" /><stop offset="1" stopColor="#6d9ab8" /></linearGradient>
        </defs>
        <circle cx="26.500" cy="748" r="17.500" fill="url(#orb)" stroke="#28435c" />
        <path d="M11 746Q12 732 26.500 732Q41 732 42 746Q27 752 11 746Z" fill="url(#gloss)" opacity=".55" />
        <path d="M18 742Q22 739 26 741L24 748Q20 746 16 749Z" fill="#e8622a" />
        <path d="M28 742Q32 744 38 741L36 749Q31 751 26 749Z" fill="#8cc63f" />
        <path d="M15 751Q19 748 23 750L21 757Q17 755 13 757Z" fill="#4da3e0" />
        <path d="M25 751Q30 753 35 751L33 758Q28 760 23 758Z" fill="#fcc51e" />
        <path d="M83 739L99 741V762L83 764Z" fill="#8fc1e4" stroke="#5b99c8" />
        <path d="M76 740H92V764H76Z" fill="#b9dcf2" stroke="#6aa5d0" />
        <circle cx="85.500" cy="749" r="8.500" fill="#f17a1c" stroke="#d86210" />
        <path d="M82 744L91 749L82 754.500Z" fill="#fff" />
      </svg>
      {TASKS.map((k) => (
        <div
          key={k}
          className={
            k === "yandex"
              ? "mr-px flex h-[39px] w-[61px] items-center justify-center"
              : k === "spr"
              ? "mr-px flex h-[39px] w-[61px] items-center justify-center rounded-[3px] border border-[#7c97b4] bg-linear-to-br from-[#f4f9fd] to-[#cfe2f2] inset-ring inset-ring-white/80"
              : "mr-px flex h-[39px] w-[61px] items-center justify-center rounded-[3px] border border-[#6f8cab] bg-linear-to-br from-[#d5e4f3] to-[#a9c8e5] inset-ring inset-ring-white/50"
          }
        >
          <TaskIcon kind={k} />
        </div>
      ))}
      <svg className="ml-auto h-[39px] w-[100px] shrink-0" viewBox="1180 729 100 39">
        <path d="M1183 751.500L1187.500 747L1192 751.500Z" fill="#fff" stroke="#5b6b7d" strokeWidth=".6" />
        <g stroke="#fff" fill="none" strokeWidth="1.400">
          <path d="M1208 744.500H1219V754.500H1209M1210 757H1218M1214 755V757" />
          <path d="M1205 743V747H1209V743M1207 747V757" />
          <path d="M1230.500 742V757M1231 743.500Q1235 742 1237 744Q1240 745 1242 744V750" />
        </g>
        <path d="M1231 744Q1235 742 1237 744.500L1242 744.500V751L1236 751Q1233 750 1231 751Z" fill="#dfe5ec" opacity=".85" />
        <circle cx="1239.500" cy="752.500" r="5" fill="#d8301e" stroke="#fff" strokeWidth=".7" />
        <path d="M1237.500 750.500L1241.500 754.500M1241.500 750.500L1237.500 754.500" stroke="#fff" strokeWidth="1.500" />
        <path d="M1252.500 746.500H1255L1259.500 742.500V756.500L1255 752.500H1252.500Z" fill="#eef2f6" stroke="#fff" />
        <path d="M1261.500 746Q1263 749 1261.500 752.500M1264 745Q1266 749 1264 754M1266.500 743.500Q1269.500 749 1266.500 755.500" stroke="#fff" fill="none" />
      </svg>
      <div className={`w-[64px] pt-[3px] text-center text-[12px] leading-[17px] tracking-[-0.65px] whitespace-nowrap text-white ${UI}`}>
        <div>15:52</div>
        <div>13.07.2015</div>
      </div>
      <div className="ml-[7px] h-[39px] w-[15px] border border-[#4d6178] bg-linear-to-b from-[#b5c5d5] via-[#6f879f] to-[#a5b9cc]" />
    </div>
  );
}

const COLS = ["ID", "Послед-ть", "Status", "Type", "LSX_KMX", "LSY_KMY", "LEX_KR", "LEY_KSW", "Lnn_KEW", "Vel", "Acc", "Puls"];
const ROWS = [
  ["44070", "0062", "1", "0", "6663", "50", "6663", "400", "0", "40", "40", "43"],
  ["44071", "0063", "1", "0", "6663", "400", "6823", "400", "0", "40", "40", "35"],
  ["44072", "0064", "1", "0", "7770", "400", "7930", "400", "0", "40", "40", "35"],
  ["44073", "0065", "1", "0", "7930", "400", "7930", "50", "0", "40", "40", "43"],
  ["44074", "0066", "1", "0", "8404", "50", "8404", "150", "0", "40", "40", "36"],
  ["44075", "0067", "1", "0", "8404", "150", "8554", "150", "0", "40", "40", "33"],
  ["44076", "0068", "1", "0", "8554", "150", "8554", "50", "0", "40", "40", "36"],
  ["44077", "0069", "1", "0", "9604", "50", "9604", "150", "0", "40", "40", "36"],
  ["44078", "0070", "1", "0", "9604", "150", "9754", "150", "0", "40", "40", "33"],
  ["44079", "0071", "1", "0", "9754", "150", "9754", "50", "0", "40", "40", "36"],
  ["44080", "0072", "1", "0", "10040", "50", "10040", "400", "0", "40", "40", "43"],
  ["44081", "0073", "1", "0", "10040", "400", "10200", "400", "0", "40", "40", "35"],
  ["44082", "", "-1", "0", "3500", "2000", "4500", "1000", "0", "40", "40", "0"],
];
const GRID = "grid grid-cols-[13px_65px_151px_repeat(10,65px)]";

function Annotations() {
  return (
    <svg className="absolute top-[268px] left-[358px] h-[60px] w-[260px]" viewBox="860 360 260 60">
      <ellipse cx="902.500" cy="379.500" rx="33.500" ry="9.500" fill="none" stroke="#ed1c24" />
      <ellipse cx="970.500" cy="382.500" rx="33" ry="14" fill="none" stroke="#c3c3c3" strokeWidth="6" />
      <ellipse cx="1039.500" cy="381.500" rx="33" ry="13.500" fill="none" stroke="#ffaec9" strokeWidth="3" />
      <path d="M973 399L984 399L986 402H992V413H973ZM1024 401H1035V406L1043 410V416H1031V413L1024 409Z" fill="#fff" />
      <g fontFamily="Open Sans, sans-serif" fontWeight="bold" fontSize="13.500" textAnchor="middle">
        <text x="903" y="406" fill="#ed1c24">1</text>
        <text x="969" y="410">2</text>
        <text x="1041" y="408">3</text>
        <text x="1106" y="407">4</text>
      </g>
    </svg>
  );
}

function PlotterWindow() {
  return (
    <div className={`absolute top-[90px] left-[500px] flex h-[364px] w-[880px] flex-col border-t-2 border-l-2 border-[#f4f4f4] border-b border-b-[#696969] text-[12px] text-black ${SANS}`}>
      <div className="flex grow flex-col border-t-[5px] border-b-[6px] border-l-[5px] border-[#b4b4b4] bg-[#f0f0f0] pt-px pl-px">
        <div className="flex h-[21px] shrink-0 items-center bg-linear-to-r from-[#99b4d1] to-[#b9d1ea] pl-[3px]">
          <PressIcon className="h-4 w-4" />
          <span className={`ml-[4px] text-[12px] leading-[20px] tracking-[-0.35px] ${UI}`}>Таблица плоттера</span>
        </div>
        <div className="relative mt-[6px] ml-px h-[287px] shrink-0 border border-[#a0a0a0] pl-px pt-[10px]">
          <span className="absolute -top-[6px] left-[6px] bg-[#f0f0f0] px-px leading-[15px] tracking-[-0.6px]">Таблица</span>
          <div className="border-t-2 border-[#696969] bg-white">
            <div className={`${GRID} h-[17px] border-b border-black bg-[#f0f0f0] text-center leading-[16px]`}>
              <div className="border-r border-black" />
              {COLS.map((c, i) => (
                <div key={c} className={`border-r border-r-black shadow-[inset_-1px_-1px_0_#a0a0a0] ${i === 11 ? "pr-[18px]" : ""} tracking-[-0.35px] whitespace-nowrap`}>{c}</div>
              ))}
            </div>
            {ROWS.map((r) => (
              <div key={r[0]} className={`${GRID} h-[18px] text-center leading-[18px] tracking-[-0.65px]`}>
                <div className="flex items-center justify-center border-r-2 border-b border-black border-b-[#555] bg-[#f0f0f0]">
                  {r[0] === "44082" && <svg className="h-[12px] w-[7px]" viewBox="0 0 7 12"><path d="M0 0V12L7 6Z" /></svg>}
                </div>
                {r.map((v, i) => (
                  <div
                    key={i}
                    className={
                      v === "44082"
                        ? "border border-dotted border-[#a06030] bg-[#3399ff] leading-[16px] text-white"
                        : "border-r border-b border-[#c0c0c0]"
                    }
                  >
                    {v}
                  </div>
                ))}
              </div>
            ))}
            <div className="h-[2px]" />
          </div>
          <div className="flex h-[18px] items-center bg-linear-to-b from-[#e6e6e6] to-[#eeeeee]">
            <svg className="ml-[7px] h-[6px] w-[4px]" viewBox="0 0 4 6"><path d="M4 0V6L0 3Z" fill="#333" /></svg>
            <div className="ml-[8px] h-[15px] w-[15px] rounded-[2px] border border-[#979797] bg-linear-to-b from-[#f4f4f4] to-[#c8c8c8]" />
          </div>
        </div>
        <div className="mt-[10px] flex items-center">
          <div className="h-[12px] w-[12px] border border-[#696969] border-r-[#e3e3e3] border-b-[#e3e3e3] bg-white">
            <svg className="h-[10px] w-[10px]" viewBox="0 0 10 10"><path d="M2 4.500L4 7L8.500 2.500" fill="none" stroke="#000" strokeWidth="2" /></svg>
          </div>
          <span className="ml-[6px] leading-[15px] tracking-[-0.45px]">Применить изменения</span>
        </div>
      </div>
      <Annotations />
    </div>
  );
}

export default function App() {
  return (
    <div className="relative flex h-[768px] w-[1366px] flex-col overflow-hidden bg-[#f0f0f0]">
      <TitleBar />
      <MenuBar />
      <Header />
      <div className="mt-px flex h-[601px] shrink-0 flex-col border-t-2 border-l-2 border-t-white border-l-[#fafafa]">
        <div className="-ml-[2px] flex flex-col">
          <Workspace />
          <LineDiagram />
          <StatusBars />
        </div>
      </div>
      <ToolBar />
      <TaskBar />
      <PlotterWindow />
    </div>
  );
}
